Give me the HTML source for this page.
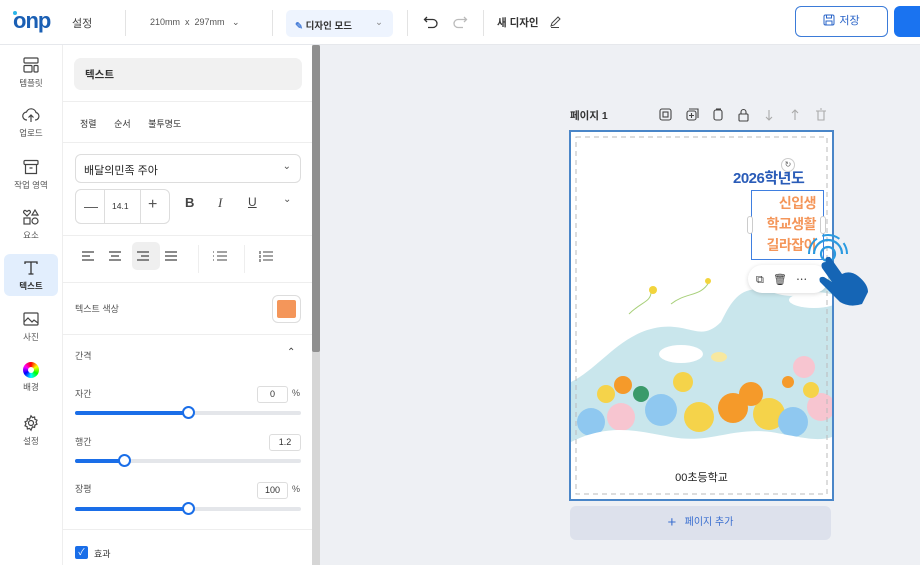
<!DOCTYPE html>
<html><head><meta charset="utf-8">
<style>
*{box-sizing:border-box;margin:0;padding:0}
body{width:920px;height:565px;overflow:hidden;background:#eef0f4;font-family:"Liberation Sans","Noto Sans CJK KR",sans-serif;color:#333;position:relative}
.abs{position:absolute}
.top{left:0;top:0;width:920px;height:45px;background:#fff;border-bottom:1px solid #e6e8ec}
.div{top:10px;width:1px;height:26px;background:#e3e3e3}
.t{font-size:11px}
.rail{left:0;top:45px;width:63px;height:520px;background:#fff;border-right:1px solid #eee}
.ri{position:absolute;left:4px;width:54px;text-align:center;font-size:8.5px;color:#555}
.ri svg{display:block;margin:0 auto 3px}
.panel{left:63px;top:45px;width:249px;height:520px;background:#fff}
.sec{position:absolute;left:0;width:249px;height:1px;background:#eee}
.sl{position:absolute;left:12px;width:226px;height:4px;background:#e4e6ea;border-radius:2px}
.sl b{position:absolute;left:0;top:0;height:4px;background:#1a6ee8;border-radius:2px}
.sl i{position:absolute;top:-5px;width:13px;height:13px;border:2px solid #1a6ee8;background:#fff;border-radius:50%}
.inp{position:absolute;height:17px;border:1px solid #ddd;border-radius:3px;font-size:9px;text-align:center;line-height:15px;color:#333}
.lbl{position:absolute;font-size:9px;color:#555}
</style></head><body>

<div class="abs top">
  <div class="abs" style="left:13px;top:10px;font:bold 22px 'Liberation Sans',sans-serif;color:#1a5fb4;letter-spacing:-1px;line-height:22px">onp</div>
  <div class="abs" style="left:13px;top:11px;width:4px;height:4px;background:#2bb5e8;border-radius:50%"></div>
  <div class="abs t" style="left:72px;top:15px;width:38px;height:20px;color:#444">설정</div>
  <div class="abs div" style="left:125px"></div>
  <div class="abs" style="left:150px;top:17px;font-size:9px;color:#555">210mm &nbsp;x&nbsp; 297mm &nbsp; ⌄</div>
  <div class="abs div" style="left:272px"></div>
  <div class="abs" style="left:286px;top:10px;width:107px;height:27px;background:#eef4fe;border-radius:5px;font-size:9.5px;font-weight:bold;color:#333;padding:8px 0 0 9px"><span style="color:#4a7fd8">✎</span> 디자인 모드<span style="position:absolute;right:10px;top:7px;color:#888;font-weight:normal">⌄</span></div>
  <div class="abs div" style="left:407px"></div>
  <svg class="abs" style="left:423px;top:14px" width="16" height="16" viewBox="0 0 16 16"><path d="M4 3L1.5 5.5 4 8M2 5.5h8a4 4 0 010 8H5" fill="none" stroke="#333" stroke-width="1.3"/></svg>
  <svg class="abs" style="left:452px;top:14px" width="16" height="16" viewBox="0 0 16 16"><path d="M12 3l2.5 2.5L12 8M14 5.5H6a4 4 0 000 8h5" fill="none" stroke="#bbb" stroke-width="1.3"/></svg>
  <div class="abs div" style="left:483px"></div>
  <div class="abs" style="left:497px;top:15px;font-size:10.5px;font-weight:bold;color:#333">새 디자인</div>
  <svg class="abs" style="left:548px;top:15px" width="14" height="14" viewBox="0 0 14 14"><path d="M3 11l1-3 6-6 2 2-6 6zM3 12.5h8" fill="none" stroke="#444" stroke-width="1"/></svg>
  <div class="abs" style="left:795px;top:6px;width:93px;height:31px;border:1px solid #3b7bd8;border-radius:6px;font-size:11px;color:#2a64c8;text-align:center;line-height:29px">
    <svg width="12" height="12" viewBox="0 0 12 12" style="vertical-align:-2px;margin-right:4px"><rect x="1" y="1" width="10" height="10" rx="1.5" fill="none" stroke="#2a64c8"/><rect x="3.5" y="1" width="5" height="3" fill="none" stroke="#2a64c8"/><rect x="3" y="7" width="6" height="4" fill="none" stroke="#2a64c8"/></svg>저장</div>
  <div class="abs" style="left:894px;top:6px;width:40px;height:31px;background:#1a73f0;border-radius:6px"></div>
</div>

<div class="abs rail">
  <div class="ri" style="top:11px"><svg width="18" height="18" viewBox="0 0 18 18" fill="none" stroke="#444" stroke-width="1.2"><rect x="2" y="2" width="14" height="5" rx="1"/><rect x="2" y="9.5" width="8" height="6.5" rx="1"/><rect x="12" y="9.5" width="4" height="6.5" rx="1"/></svg>템플릿</div>
  <div class="ri" style="top:61px"><svg width="18" height="18" viewBox="0 0 18 18" fill="none" stroke="#444" stroke-width="1.2"><path d="M5 14a4 4 0 01-.5-8A5 5 0 0114 6.5a3.8 3.8 0 01-1 7.5M9 16V9M6.5 11.5L9 9l2.5 2.5"/></svg>업로드</div>
  <div class="ri" style="top:113px"><svg width="18" height="18" viewBox="0 0 18 18" fill="none" stroke="#444" stroke-width="1.2"><rect x="2" y="2.5" width="14" height="4" rx="1"/><path d="M3.5 6.5v9h11v-9M7.5 10h3"/></svg>작업 영역</div>
  <div class="ri" style="top:163px"><svg width="18" height="18" viewBox="0 0 18 18" fill="none" stroke="#444" stroke-width="1.2"><path d="M5 8L2 5c-1-1 0-3 1.5-2.5L5 3.5 6.5 2.5C8 2 9 4 8 5z"/><path d="M13 2l3 5h-6z"/><rect x="2" y="10" width="6" height="6"/><circle cx="13" cy="13" r="3"/></svg>요소</div>
  <div class="ri" style="top:209px;height:42px;background:#e2eefd;border-radius:6px;padding-top:5px;font-weight:bold;color:#333"><svg width="18" height="18" viewBox="0 0 18 18" fill="none" stroke="#333" stroke-width="1.3"><path d="M3 5V3h12v2M9 3v12M6.5 15h5"/></svg>텍스트</div>
  <div class="ri" style="top:265px"><svg width="18" height="18" viewBox="0 0 18 18" fill="none" stroke="#444" stroke-width="1.2"><rect x="2" y="3" width="14" height="12" rx="1"/><path d="M2 12l4-4 4 4 2-2 4 3"/></svg>사진</div>
  <div class="ri" style="top:317px"><div style="width:16px;height:16px;margin:0 auto 3px;border-radius:50%;background:conic-gradient(red,yellow,lime,cyan,blue,magenta,red);position:relative"><div style="position:absolute;left:5px;top:5px;width:6px;height:6px;border-radius:50%;background:#fff"></div></div>배경</div>
  <div class="ri" style="top:369px"><svg width="18" height="18" viewBox="0 0 18 18" fill="none" stroke="#444" stroke-width="1.2"><circle cx="9" cy="9" r="2.5"/><path d="M9 1.8l1.4 1.8 2.2-.6.3 2.3 2.1.9-1 2 1 2-2.1.9-.3 2.3-2.2-.6L9 16.2 7.6 14.4l-2.2.6-.3-2.3L3 11.8l1-2-1-2 2.1-.9.3-2.3 2.2.6z"/></svg>설정</div>
</div>

<div class="abs panel">
  <div class="abs" style="left:11px;top:13px;width:228px;height:32px;background:#f1f1f1;border-radius:7px;font-size:10.5px;font-weight:bold;color:#333;padding:9px 0 0 11px">텍스트</div>
  <div class="sec" style="top:56px"></div>
  <div class="abs" style="left:17px;top:72px;font-size:9px;color:#333">정렬 &nbsp; &nbsp; &nbsp; 순서 &nbsp; &nbsp; &nbsp; 불투명도</div>
  <div class="sec" style="top:97px"></div>
  <div class="abs" style="left:12px;top:109px;width:226px;height:29px;border:1px solid #ddd;border-radius:6px;font-size:11px;padding:7px 0 0 8px;color:#222">배달의민족 주아<span style="position:absolute;right:9px;top:6px;color:#555;font-size:10px">⌄</span></div>
  <div class="abs" style="left:12px;top:144px;width:95px;height:35px;border:1px solid #ddd;border-radius:6px">
    <div class="abs" style="left:28px;top:0;width:1px;height:33px;background:#ddd"></div>
    <div class="abs" style="left:64px;top:0;width:1px;height:33px;background:#ddd"></div>
    <div class="abs" style="left:8px;top:8px;font-size:14px;color:#555">—</div>
    <div class="abs" style="left:36px;top:11px;font-size:8.5px;color:#333">14.1</div>
    <div class="abs" style="left:72px;top:6px;font-size:16px;color:#555">+</div>
  </div>
  <div class="abs" style="left:122px;top:150px;font-size:13px;font-weight:bold;color:#444">B</div>
  <div class="abs" style="left:155px;top:150px;font:italic 13px 'Liberation Serif',serif;color:#444">I</div>
  <div class="abs" style="left:185px;top:150px;font-size:12px;color:#444;text-decoration:underline">U</div>
  <div class="abs" style="left:220px;top:149px;font-size:10px;color:#555">⌄</div>
  <div class="sec" style="top:190px"></div>
  <div class="abs" style="left:69px;width:28px;height:28px;background:#efefef;border-radius:5px;top:197px"></div>
  <svg class="abs" style="left:18px;top:204px" width="110" height="14" viewBox="0 0 110 14" stroke="#444" stroke-width="1.2">
    <path d="M1 3h12M1 7h8M1 11h12"/><path d="M28 3h12M30 7h8M28 11h12"/><path d="M56 3h12M60 7h8M56 11h12"/><path d="M84 3h12M84 7h12M84 11h12"/></svg>
  <div class="abs" style="left:135px;top:200px;width:1px;height:28px;background:#eee"></div>
  <div class="abs" style="left:181px;top:200px;width:1px;height:28px;background:#eee"></div>
  <svg class="abs" style="left:150px;top:204px" width="110" height="14" viewBox="0 0 110 14" stroke="#444" stroke-width="1.1">
    <path d="M0 3h1M0 7h1M0 11h1M4 3h10M4 7h10M4 11h10"/><path d="M47 2v3M47 6v3M47 10v3M50 3h10M50 7h10M50 11h10"/></svg>
  <div class="sec" style="top:237px"></div>
  <div class="lbl" style="left:12px;top:257px">텍스트 색상</div>
  <div class="abs" style="left:209px;top:250px;width:29px;height:28px;border:1px solid #ddd;border-radius:6px;background:#fff;padding:4px"><div style="width:19px;height:18px;background:#f4965a;border-radius:2px"></div></div>
  <div class="sec" style="top:289px"></div>
  <div class="lbl" style="left:12px;top:304px">간격</div>
  <div class="abs" style="left:224px;top:302px;font-size:10px;color:#444">⌃</div>
  <div class="lbl" style="left:12px;top:342px">자간</div>
  <div class="inp" style="left:194px;top:341px;width:31px">0</div><div class="lbl" style="left:229px;top:343px">%</div>
  <div class="sl" style="top:366px"><b style="width:113px"></b><i style="left:107px"></i></div>
  <div class="lbl" style="left:12px;top:390px">행간</div>
  <div class="inp" style="left:206px;top:389px;width:32px">1.2</div>
  <div class="sl" style="top:414px"><b style="width:49px"></b><i style="left:43px"></i></div>
  <div class="lbl" style="left:12px;top:437px">장평</div>
  <div class="inp" style="left:194px;top:437px;width:31px">100</div><div class="lbl" style="left:229px;top:439px">%</div>
  <div class="sl" style="top:462px"><b style="width:113px"></b><i style="left:107px"></i></div>
  <div class="sec" style="top:484px"></div>
  <div class="abs" style="left:12px;top:501px;width:13px;height:13px;background:#1a6ee8;border-radius:2px;color:#fff;font-size:9px;text-align:center;line-height:13px">✓</div>
  <div class="lbl" style="left:31px;top:502px;color:#333">효과</div>
</div>
<div class="abs" style="left:312px;top:45px;width:8px;height:520px;background:#d6d6d6"></div>
<div class="abs" style="left:312px;top:45px;width:8px;height:307px;background:#8f8f8f;border-radius:2px"></div>

<!-- canvas -->
<div class="abs" style="left:570px;top:108px;font-size:10.5px;font-weight:bold;color:#333">페이지 1</div>
<svg class="abs" style="left:658px;top:107px" width="170" height="16" viewBox="0 0 170 16" fill="none" stroke-width="1.1">
  <g stroke="#444"><rect x="2" y="2" width="11" height="11" rx="2"/><rect x="5" y="5" width="5" height="5"/>
  <rect x="29" y="4" width="9" height="9" rx="2"/><path d="M31 2h9v9M33.5 6v5M31 8.5h5"/>
  <rect x="56" y="3" width="8" height="10" rx="2"/><path d="M58 2h5"/>
  <rect x="81" y="7" width="9" height="7" rx="1"/><path d="M83 7V5a2.5 2.5 0 015 0v2"/></g>
  <g stroke="#aaa"><path d="M111 3v10M108 10l3 3 3-3M137 13V3M134 6l3-3 3 3M158 4h10M160 4v9h6V4M162 2h2"/></g>
</svg>
<div class="abs" style="left:569px;top:130px;width:265px;height:371px;border:2px solid #4a86c8;background:#fff">
  <svg class="abs" style="left:0;top:0" width="261" height="367" viewBox="0 0 261 367">
    <path d="M0 250 C30 235 50 200 90 195 C120 192 130 210 150 190 C160 170 170 150 200 160 C230 170 240 160 261 140 V330 H0Z" fill="#c9e6ec"/>
    <ellipse cx="110" cy="222" rx="22" ry="9" fill="#fff"/>
    <ellipse cx="243" cy="168" rx="25" ry="8" fill="#fff"/>
    <path d="M58 182 C70 170 80 170 80 160 M100 172 C115 160 130 165 138 150" stroke="#a8d07a" fill="none"/>
    <circle cx="82" cy="158" r="4" fill="#f2d43c"/><circle cx="137" cy="149" r="3" fill="#f2d43c"/>
    <ellipse cx="148" cy="225" rx="8" ry="5" fill="#f7e8a0"/>
    <g>
      <circle cx="52" cy="253" r="9" fill="#f59a2a"/><circle cx="112" cy="250" r="10" fill="#f5d34a"/>
      <circle cx="233" cy="235" r="11" fill="#f7c5d0"/><circle cx="217" cy="250" r="6" fill="#f59a2a"/>
      <circle cx="20" cy="290" r="14" fill="#8fc8f0"/><circle cx="50" cy="285" r="14" fill="#f7c5d0"/>
      <circle cx="90" cy="278" r="16" fill="#8fc8f0"/><circle cx="128" cy="285" r="15" fill="#f5d34a"/>
      <circle cx="162" cy="276" r="15" fill="#f59a2a"/><circle cx="198" cy="282" r="16" fill="#f5d34a"/>
      <circle cx="222" cy="290" r="15" fill="#8fc8f0"/><circle cx="250" cy="275" r="14" fill="#f7c5d0"/>
      <circle cx="180" cy="262" r="12" fill="#f59a2a"/><circle cx="70" cy="262" r="8" fill="#3a9a6a"/>
      <circle cx="35" cy="262" r="9" fill="#f5d34a"/><circle cx="240" cy="258" r="8" fill="#f5d34a"/>
    </g>
    <path d="M0 310 C40 290 70 300 100 305 C140 312 160 295 200 300 C230 305 245 310 261 305 V367 H0Z" fill="#fff"/>
    <rect x="5" y="5" width="251" height="357" fill="none" stroke="#bbb" stroke-dasharray="5 4"/>
  </svg>
  <div class="abs" style="left:162px;top:35px;font:bold 15px 'Liberation Sans','Noto Sans CJK KR',sans-serif;color:#2a5cb8;letter-spacing:-.5px">2026학년도</div>
  <div class="abs" style="left:210px;top:26px;width:14px;height:14px;border:1px solid #ccc;border-radius:50%;background:#fff;font-size:8px;text-align:center;line-height:12px;color:#666">↻</div>
  <div class="abs" style="left:180px;top:58px;width:73px;height:70px;border:1.5px solid #3f7fe0"></div>
  <div class="abs" style="left:180px;top:61px;width:65px;text-align:right;font:bold 14px/21px 'Liberation Sans','Noto Sans CJK KR',sans-serif;color:#f4965a;letter-spacing:-.5px">신입생<br>학교생활<br>길라잡이</div>
  <div class="abs" style="left:176px;top:84px;width:6px;height:18px;border:1px solid #ccc;border-radius:3px;background:#fff"></div>
  <div class="abs" style="left:249px;top:84px;width:6px;height:18px;border:1px solid #ccc;border-radius:3px;background:#fff"></div>
  <div class="abs" style="left:177px;top:133px;width:80px;height:28px;background:#fff;border-radius:14px;box-shadow:0 1px 5px rgba(0,0,0,.15);font-size:11px;color:#333;padding:6px 0 0 8px">⧉ &nbsp; 🗑 &nbsp; ⋯</div>
  <div class="abs" style="left:0;top:337px;width:261px;text-align:center;font-size:11px;color:#222">00초등학교</div>
</div>
<svg class="abs" style="left:806px;top:232px" width="66" height="76" viewBox="0 0 66 76">
  <circle cx="22" cy="22" r="7" fill="none" stroke="#2a9ae0" stroke-width="2.2"/>
  <path d="M8 22a14 14 0 0128 0" fill="none" stroke="#2a9ae0" stroke-width="2.2"/>
  <path d="M3 22a19 19 0 0138 0" fill="none" stroke="#2a9ae0" stroke-width="2" stroke-dasharray="18 6"/>
  <path d="M20 30 Q18 24 24 25 L36 42 Q44 38 52 44 Q62 52 62 60 L56 72 Q44 76 34 70 L14 50 Q12 44 18 45 L26 50 L16 36 Q14 30 20 30Z" fill="#1565b5"/>
</svg>
<div class="abs" style="left:570px;top:506px;width:261px;height:34px;background:#dde1ec;border-radius:6px;text-align:center;font-size:10px;color:#3a6fd0;line-height:34px"><span style="font-size:15px;vertical-align:-2px">+</span> &nbsp; 페이지 추가</div>
</body></html>
